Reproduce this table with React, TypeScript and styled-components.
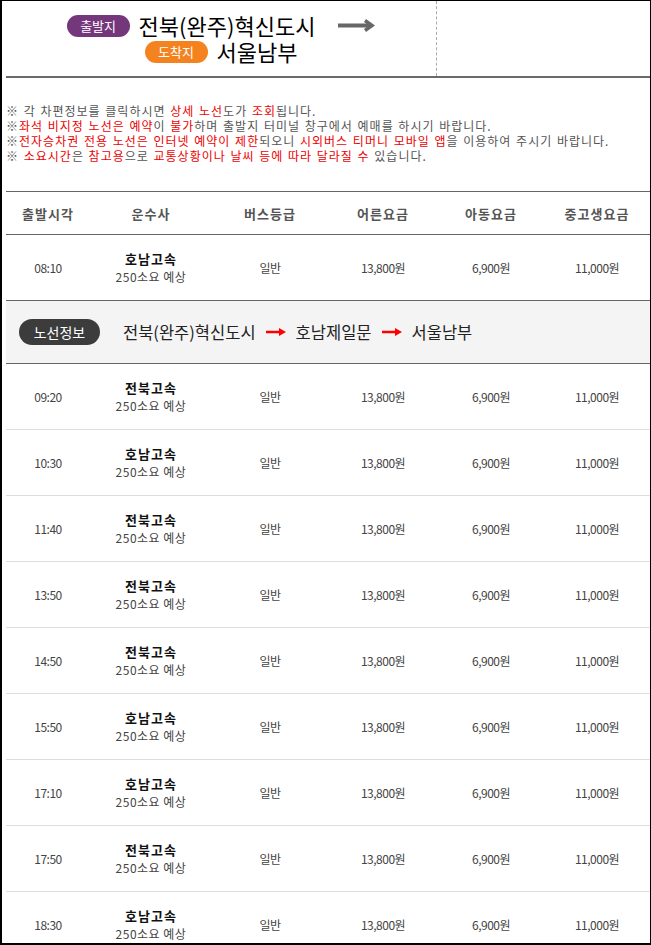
import styled, { createGlobalStyle } from "styled-components";

const GlobalStyle = createGlobalStyle`
  html, body {
    margin: 0;
    padding: 0;
    background: #fff;
  }
  body {
    font-family: "Noto Sans CJK KR", "Noto Sans", sans-serif;
    color: #333;
  }
`;

type Schedule = { time: string; company: string };

const schedules: Schedule[] = [
  { time: "08:10", company: "호남고속" },
  { time: "09:20", company: "전북고속" },
  { time: "10:30", company: "호남고속" },
  { time: "11:40", company: "전북고속" },
  { time: "13:50", company: "전북고속" },
  { time: "14:50", company: "전북고속" },
  { time: "15:50", company: "호남고속" },
  { time: "17:10", company: "호남고속" },
  { time: "17:50", company: "전북고속" },
  { time: "18:30", company: "호남고속" },
];

const headers = ["출발시각", "운수사", "버스등급", "어른요금", "아동요금", "중고생요금"];

function GrayArrow() {
  return (
    <svg width="37" height="13" viewBox="0 0 37 13">
      <line x1="0" y1="6.5" x2="33" y2="6.5" stroke="#676767" strokeWidth="4" />
      <polyline points="27,1.5 34,6.5 27,11.5" fill="none" stroke="#676767" strokeWidth="3.5" />
    </svg>
  );
}

function RedArrow() {
  return (
    <svg width="20" height="10" viewBox="0 0 20 10">
      <line x1="0" y1="5" x2="16" y2="5" stroke="#f00" strokeWidth="2.5" />
      <polygon points="13,1 20,5 13,9" fill="#f00" />
    </svg>
  );
}

export default function App() {
  const [first, ...rest] = schedules;
  return (
    <>
      <GlobalStyle />
      <Frame>
        <Header>
          <Places>
            <PlaceLine>
              <Pill $bg="#74377c">출발지</Pill>
              <PlaceName>전북(완주)혁신도시</PlaceName>
              <ArrowBox>
                <GrayArrow />
              </ArrowBox>
            </PlaceLine>
            <PlaceLine>
              <Pill $bg="#f4831f">도착지</Pill>
              <PlaceName>서울남부</PlaceName>
            </PlaceLine>
          </Places>
          <div />
        </Header>

        <Notices>
          <p>
            ※ 각 차편정보를 클릭하시면 <Red>상세</Red> <Red>노선</Red>도가 <Red>조회</Red>됩니다.
          </p>
          <p>
            ※<Red>좌석 비지정 노선은 예약</Red>이 <Red>불가</Red>하며 출발지 터미널 창구에서 예매를 하시기 바랍니다.
          </p>
          <p>
            ※<Red>전자승차권 전용 노선은 인터넷 예약이 제한</Red>되오니 <Red>시외버스 티머니 모바일 앱</Red>을 이용하여 주시기 바랍니다.
          </p>
          <p>
            ※ <Red>소요시간</Red>은 <Red>참고용</Red>으로 <Red>교통상황이나 날씨 등에 따라 달라질 수</Red> 있습니다.
          </p>
        </Notices>

        <Table>
          <HeadRow>
            {headers.map((h) => (
              <HeadCell key={h}>{h}</HeadCell>
            ))}
          </HeadRow>
          <ScheduleRow item={first} strong />
          <RouteRow>
            <RoutePill>노선정보</RoutePill>
            <RouteStops>
              <span>전북(완주)혁신도시</span>
              <RedArrow />
              <span>호남제일문</span>
              <RedArrow />
              <span>서울남부</span>
            </RouteStops>
          </RouteRow>
          {rest.map((s) => (
            <ScheduleRow key={s.time} item={s} />
          ))}
        </Table>
      </Frame>
    </>
  );
}

function ScheduleRow({ item, strong }: { item: Schedule; strong?: boolean }) {
  return (
    <Row $strong={strong}>
      <Cell>{item.time}</Cell>
      <Cell>
        <Company>{item.company}</Company>
        <Duration>250소요 예상</Duration>
      </Cell>
      <Cell>일반</Cell>
      <Cell>13,800원</Cell>
      <Cell>6,900원</Cell>
      <Cell>11,000원</Cell>
    </Row>
  );
}

const Frame = styled.div`
  box-sizing: border-box;
  width: 651px;
  height: 945px;
  overflow: hidden;
  border: 1px solid #000;
  border-left-width: 2px;
  border-bottom-width: 2px;
  padding-left: 4px;
`;

const Header = styled.div`
  display: grid;
  grid-template-columns: 431px 1fr;
  height: 75px;
  border-bottom: 2px solid #6a6a6a;

  > div:first-child {
    border-right: 1px dashed #aaa;
  }
`;

const Places = styled.div`
  display: flex;
  flex-direction: column;
  align-items: center;
  padding-top: 12px;
  gap: 1px;
`;

const PlaceLine = styled.div`
  display: flex;
  align-items: center;
  height: 25px;
`;

const Pill = styled.span<{ $bg: string }>`
  display: inline-flex;
  align-items: center;
  justify-content: center;
  width: 63px;
  height: 22px;
  border-radius: 11px;
  background: ${(p) => p.$bg};
  color: #fff;
  font-size: 13px;
  margin-right: 9px;
`;

const PlaceName = styled.span`
  font-size: 22px;
  color: #000;
  line-height: 25px;
`;

const ArrowBox = styled.span`
  display: inline-flex;
  margin-left: 23px;
`;

const Notices = styled.div`
  padding-top: 25px;
  height: 88px;
  font-size: 12px;
  line-height: 15px;
  color: #555;
  letter-spacing: 1px;
  word-spacing: 1px;

  p {
    margin: 0;
    white-space: nowrap;
  }
`;

const Red = styled.span`
  color: #ee0000;
`;

const Table = styled.div`
  border-top: 1px solid #666;
`;

const grid = `
  display: grid;
  grid-template-columns: 84px 122px 116px 110px 106px 1fr;
`;

const HeadRow = styled.div`
  ${grid}
  height: 42px;
  border-bottom: 1px solid #666;
`;

const HeadCell = styled.div`
  display: flex;
  align-items: center;
  justify-content: center;
  font-size: 13px;
  font-weight: bold;
  color: #555;
  letter-spacing: 1px;
`;

const Row = styled.div<{ $strong?: boolean }>`
  ${grid}
  height: 65px;
  border-bottom: 1px solid ${(p) => (p.$strong ? "#666" : "#ddd")};
`;

const Cell = styled.div`
  display: flex;
  flex-direction: column;
  align-items: center;
  justify-content: center;
  font-size: 12px;
  color: #444;
  letter-spacing: -0.5px;
`;

const Company = styled.div`
  font-size: 13px;
  font-weight: bold;
  color: #111;
  letter-spacing: 1px;
  line-height: 19px;
`;

const Duration = styled.div`
  font-size: 12px;
  color: #444;
  line-height: 18px;
  letter-spacing: 0.5px;
`;

const RouteRow = styled.div`
  display: flex;
  align-items: center;
  height: 62px;
  background: #f4f4f4;
  border-bottom: 1px solid #666;
  padding-left: 13px;
`;

const RoutePill = styled.span`
  display: inline-flex;
  align-items: center;
  justify-content: center;
  width: 81px;
  height: 26px;
  border-radius: 13px;
  background: #3c3c3c;
  color: #fff;
  font-size: 14px;
`;

const RouteStops = styled.div`
  display: flex;
  align-items: center;
  gap: 10px;
  margin-left: 23px;
  font-size: 16.5px;
  color: #222;
`;
